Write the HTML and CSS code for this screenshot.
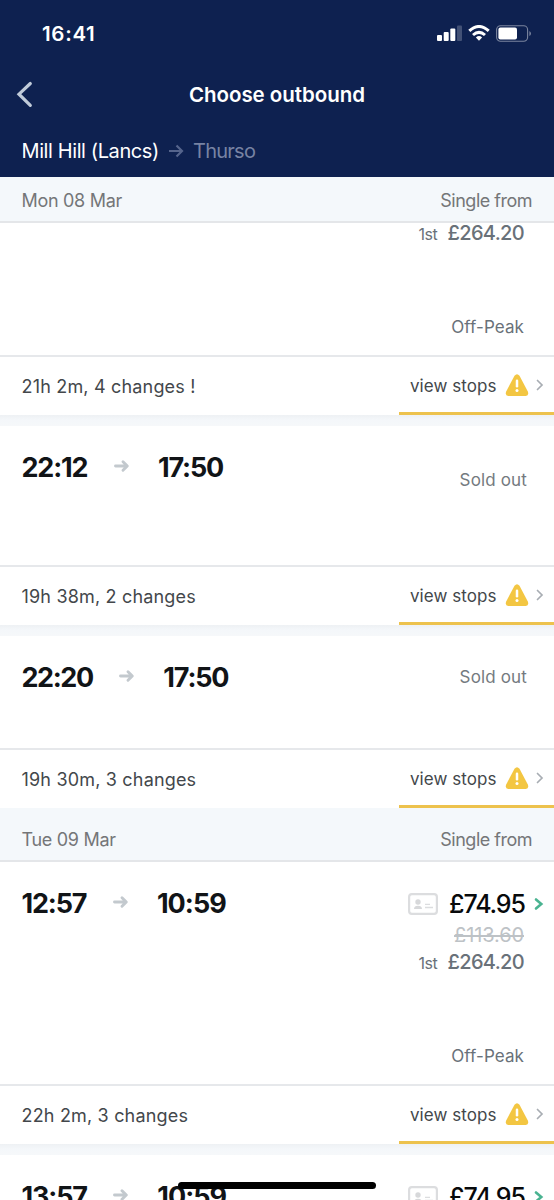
FILE: index.html
```
<!DOCTYPE html>
<html lang="en">
<head>
<meta charset="utf-8">
<title>Choose outbound</title>
<link rel="stylesheet" href="styles.css">
</head>
<body>
<svg class="defs" width="0" height="0" aria-hidden="true">
  <symbol id="arrow" viewBox="0 0 16 14"><path d="M1.5 7H13M9 2.8L13.3 7L9 11.2" fill="none" stroke="currentColor" stroke-width="2.9" stroke-linecap="round" stroke-linejoin="round"/></symbol>
  <symbol id="chevron" viewBox="0 0 8 12"><path d="M1.5 1.5L6 6L1.5 10.5" fill="none" stroke="currentColor" stroke-width="1.7" stroke-linecap="round" stroke-linejoin="miter"/></symbol>
  <symbol id="chevron-bold" viewBox="0 0 10 14"><path d="M2 2.5L7.3 7L2 11.5" fill="none" stroke="currentColor" stroke-width="2.6" stroke-linecap="round" stroke-linejoin="miter"/></symbol>
  <symbol id="warning" viewBox="0 0 24 22"><path d="M9.5 1.8Q12 -1.2 14.5 1.8L22.8 17.5Q24.2 21.5 20.8 22H3.2Q-.2 21.5 1.2 17.5Z" fill="#f3c642"/><path d="M12 6.8V12.2" stroke="#fff" stroke-width="2.5" stroke-linecap="round"/><circle cx="12" cy="16.6" r="1.5" fill="#fff"/></symbol>
  <symbol id="card" viewBox="0 0 30 22"><rect x="1.1" y="1.1" width="27.8" height="19.8" rx="2.8" fill="none" stroke="#dcdddf" stroke-width="2.2"/><circle cx="10" cy="9" r="2.7" fill="#d7d8da"/><path d="M6 16Q6.2 12.8 10 12.8T14 16Z" fill="#d7d8da"/><path d="M17 11.3H22M17 14.5H25" stroke="#dcdddf" stroke-width="1.3"/></symbol>
</svg>
<main class="screen">
  <header class="header">
    <div class="status">
      <span class="clock">16:41</span>
      <svg class="status-icons" viewBox="0 0 96 18">
        <g fill="#fff"><rect x="0" y="10" width="5" height="6" rx="1"/><rect x="6.7" y="7" width="5" height="9" rx="1"/><rect x="13.3" y="3.5" width="5" height="12.5" rx="1"/><rect x="20" y="0.5" width="5" height="15.5" rx="1" opacity=".22"/></g>
        <g fill="none" stroke="#fff" stroke-width="3"><path d="M32.3 5.9Q42 -2.9 51.7 5.9"/><path d="M36 10Q42 4.7 48 10"/></g>
        <path d="M38.9 12.4Q42 9.8 45.1 12.4L42 15.8Z" fill="#fff"/>
        <rect x="59.6" y=".7" width="31" height="15.6" rx="4" fill="none" stroke="#fff" stroke-opacity=".45" stroke-width="1.1"/>
        <rect x="61.4" y="2.5" width="18.6" height="12" rx="2" fill="#fff"/><path d="M92.4 6Q94 7 94 8.5T92.4 11Z" fill="#fff" opacity=".45"/>
      </svg>
    </div>
    <div class="titlebar">
      <svg class="back" viewBox="0 0 18 27"><path d="M14.3 2.5L3 13.2L14.3 24.3" fill="none" stroke="#c0cbd9" stroke-width="3.2" stroke-linecap="round"/></svg>
      <h1>Choose outbound</h1>
    </div>
    <div class="route"><span class="origin">Mill Hill (Lancs)</span><svg class="route-arrow" viewBox="0 0 16 14"><path d="M1 7H14M8.5 1.5L14 7L8.5 12.5" fill="none" stroke="#55648c" stroke-width="2.2"/></svg><span class="destination">Thurso</span></div>
  </header>

  <div class="date first-date"><span class="day">Mon 08 Mar</span><span class="single">Single from</span></div>
  <section class="trip partial">
    <div class="fare"><span class="first-price"><small>1st</small><span class="sub-price">£264.20</span></span><span class="offpeak">Off-Peak</span></div>
    <footer><span class="summary">21h 2m, 4 changes !</span><span class="stops"><span class="stops-label">view stops</span><svg class="warn"><use href="#warning"/></svg><svg class="chev"><use href="#chevron"/></svg></span></footer>
  </section>
  <div class="gap"></div>
  <section class="trip sold">
    <div class="details"><span class="time">22:12</span><svg class="arrow"><use href="#arrow"/></svg><span class="time">17:50</span><span class="soldout low">Sold out</span></div>
    <footer><span class="summary">19h 38m, 2 changes</span><span class="stops"><span class="stops-label">view stops</span><svg class="warn"><use href="#warning"/></svg><svg class="chev"><use href="#chevron"/></svg></span></footer>
  </section>
  <div class="gap"></div>
  <section class="trip sold short">
    <div class="details"><span class="time tight">22:20</span><svg class="arrow"><use href="#arrow"/></svg><span class="time">17:50</span><span class="soldout">Sold out</span></div>
    <footer><span class="summary">19h 30m, 3 changes</span><span class="stops"><span class="stops-label">view stops</span><svg class="warn"><use href="#warning"/></svg><svg class="chev"><use href="#chevron"/></svg></span></footer>
  </section>
  <div class="date second-date"><span class="day">Tue 09 Mar</span><span class="single">Single from</span></div>
  <section class="trip priced">
    <div class="details"><span class="time">12:57</span><svg class="arrow"><use href="#arrow"/></svg><span class="time loose">10:59</span>
      <div class="fare"><span class="main-price"><svg class="card-icon"><use href="#card"/></svg><b>£74.95</b><svg class="buy"><use href="#chevron-bold"/></svg></span><span class="old-price">£113.60</span><span class="first-price"><small>1st</small><span class="sub-price">£264.20</span></span><span class="offpeak">Off-Peak</span></div></div>
    <footer><span class="summary">22h 2m, 3 changes</span><span class="stops"><span class="stops-label">view stops</span><svg class="warn"><use href="#warning"/></svg><svg class="chev"><use href="#chevron"/></svg></span></footer>
  </section>
  <div class="gap"></div>
  <section class="trip priced last">
    <div class="details"><span class="time">13:57</span><svg class="arrow"><use href="#arrow"/></svg><span class="time loose">10:59</span>
      <div class="fare"><span class="main-price"><svg class="card-icon"><use href="#card"/></svg><b>£74.95</b><svg class="buy"><use href="#chevron-bold"/></svg></span></div></div>
  </section>
  <div class="home-indicator"></div>
</main>
</body>
</html>
```
FILE: styles.css
```
* { box-sizing: border-box; }
body { margin: 0; background: #fff; font-family: Inter, "Liberation Sans", sans-serif; }
svg { display: block; flex: none; }
.defs { position: absolute; }
.screen { position: relative; width: 554px; height: 1200px; overflow: hidden; white-space: nowrap; }
.header { height: 177px; background: #0e2150; color: #fff; }
.status { height: 66px; display: flex; justify-content: space-between; padding: 25px 21px 0 42px; }
.clock { font-size: 20.5px; font-weight: 600; line-height: 18px; letter-spacing: .7px; }
.status-icons { width: 96px; height: 18px; }
.titlebar { height: 56px; display: flex; align-items: center; padding-left: 16px; }
.back { width: 18px; height: 27px; }
h1 { flex: 1; margin: 2px 50px 0 16px; text-align: center; font-size: 20.5px; font-weight: 600; line-height: 28px; letter-spacing: -.03px; }
.route { display: flex; align-items: center; height: 58px; padding-left: 21.5px; font-size: 20px; }
.origin { width: 146.5px; letter-spacing: -.4px; }
.route-arrow { width: 16px; height: 14px; }
.destination { margin-left: 9px; color: #7783a3; letter-spacing: -.75px; }
.date { display: flex; justify-content: space-between; background: #f4f8fb; border-bottom: 2px solid #e4e6e9; padding: 0 22px 0 21.5px; color: #747678; font-size: 18px; }
.day { letter-spacing: -.3px; }
.single { letter-spacing: -.5px; }
.first-date { height: 46px; line-height: 47px; }
.second-date { height: 54px; line-height: 63px; }
.trip { background: #fff; }
.trip footer { height: 60px; display: flex; justify-content: space-between; border-top: 2px solid #e6e8eb; padding-left: 21.5px; line-height: 58px; color: #43474b; font-size: 18px; }
.summary { padding-top: 1px; letter-spacing: .18px; }
.stops { display: flex; align-items: center; width: 155px; padding-left: 11px; border-bottom: 3px solid #edc24d; }
.stops-label { width: 94.5px; padding-top: 3px; font-size: 17px; letter-spacing: .05px; }
.warn { width: 24px; height: 22px; }
.chev { width: 8px; height: 12px; margin: 1px 0 0 7px; color: #a8adb3; }
.gap { height: 11px; background: linear-gradient(#eef1f4, #f4f7fa 5px, #f6f8fa); }
.details { display: flex; align-items: flex-start; padding: 22px 0 0 21.5px; color: #111417; }
.partial .fare { height: 132px; margin-left: auto; padding-top: 0; }
.sold .details { height: 139px; }
.short .details { height: 112px; }
.priced .details { height: 222px; }
.time { font-size: 27px; font-weight: 700; line-height: 40px; letter-spacing: -1.15px; }
.time.tight { letter-spacing: -1.4px; }
.time.loose { letter-spacing: -.95px; }
.arrow { width: 16px; height: 14px; margin: 11px 28px 0 26.5px; color: #c3c9ce; }
.soldout { margin: 4px 27px 0 auto; color: #747a80; font-size: 17px; line-height: 30px; letter-spacing: .15px; }
.soldout.low { margin-top: 17px; }
.fare { display: flex; flex-direction: column; align-items: flex-end; width: 180px; margin-left: auto; padding-right: 30px; color: #697179; }
.main-price { display: flex; align-items: center; height: 40px; margin-right: -20px; }
.card-icon { width: 30px; height: 22px; margin-right: 11px; }
.main-price b { width: 76px; color: #07090b; font-size: 25px; font-weight: 500; letter-spacing: -1.1px; }
.buy { width: 10px; height: 14px; margin-left: 9px; color: #4ab391; }
.old-price { height: 24px; color: #bdc2c6; font-size: 20px; line-height: 22px; letter-spacing: -.1px; text-decoration: line-through; }
.first-price { display: flex; align-items: baseline; height: 28px; line-height: 28px; }
.first-price small { width: 29px; font-size: 16px; letter-spacing: -.5px; }
.sub-price { font-size: 20px; font-weight: 450; letter-spacing: -.65px; }
.offpeak { margin-top: 68px; font-size: 17px; line-height: 24px; letter-spacing: .1px; }
.partial .first-price { height: 24px; line-height: 20px; }
.home-indicator { position: absolute; left: 178px; top: 1182px; width: 198px; height: 7px; border-radius: 4px; background: #000; }
```
